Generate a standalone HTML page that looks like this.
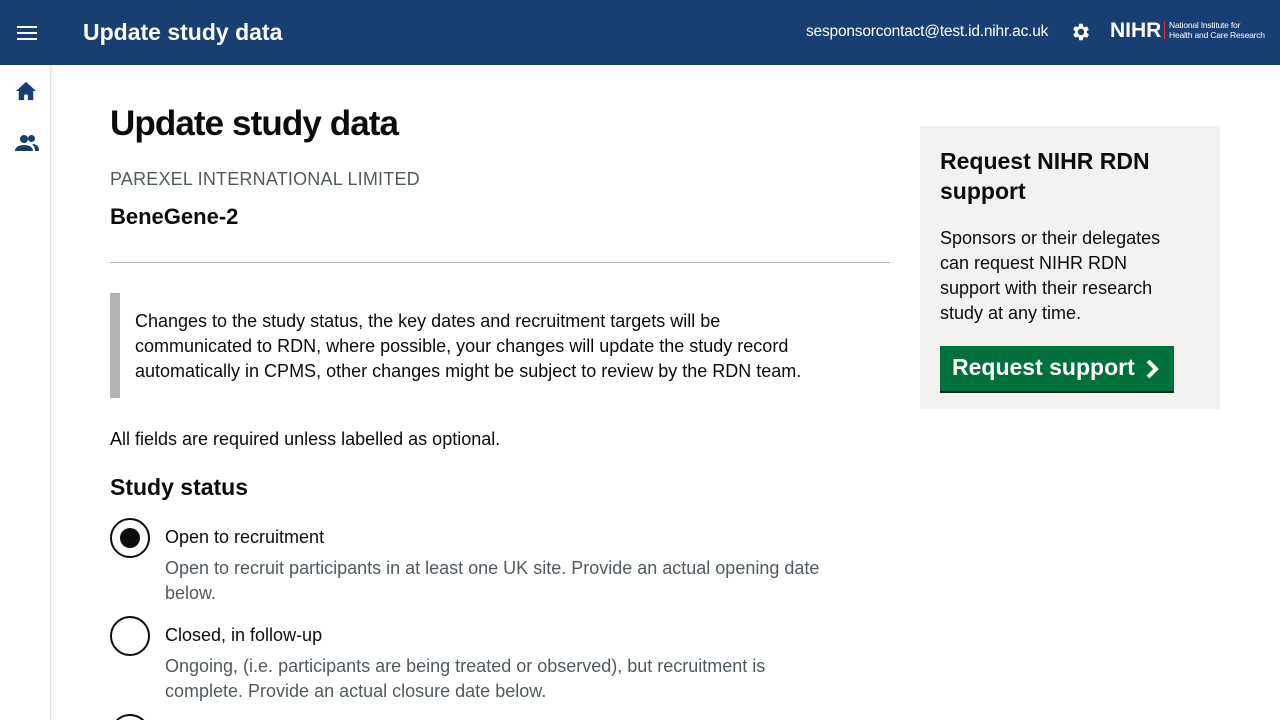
<!DOCTYPE html>
<html style="overflow:hidden"><head><meta charset="utf-8"><style>
*{box-sizing:border-box;margin:0;padding:0}
html,body{width:1280px;height:720px;overflow:hidden}
body{font-family:"Liberation Sans",sans-serif;color:#0b0c0c;background:#fff;position:relative}
.hdr{position:absolute;left:0;top:0;width:1280px;height:65px;background:#193e72;color:#fff}
.side{position:absolute;left:0;top:65px;width:51px;height:655px;background:#fff;border-right:1px solid #e4e4e4;box-shadow:1px 0 3px rgba(0,0,0,.08)}
.abs{position:absolute}
.g{color:#505a5f}
.radio{position:absolute;left:110px;width:40px;height:40px;border:2px solid #0b0c0c;border-radius:50%}
</style></head><body>
<div class="hdr">
  <svg class="abs" style="left:17px;top:25px" width="20" height="15"><rect y="1" width="20" height="2" fill="#fff"/><rect y="7" width="20" height="2" fill="#fff"/><rect y="13" width="20" height="2" fill="#fff"/></svg>
  <div class="abs" style="left:83px;top:19px;font-size:23px;font-weight:bold">Update study data</div>
  <div class="abs" style="left:806px;top:23px;font-size:15.5px;letter-spacing:-0.2px">sesponsorcontact@test.id.nihr.ac.uk</div>
  <svg class="abs" style="left:1070px;top:21px" width="22" height="22" viewBox="0 0 24 24"><path fill="#fff" d="M19.4 13a7.5 7.5 0 0 0 0-2l2.1-1.6-2-3.5-2.5 1a7 7 0 0 0-1.7-1L15 3h-4l-.4 2.7a7 7 0 0 0-1.7 1l-2.5-1-2 3.5L6.6 11a7.5 7.5 0 0 0 0 2l-2.1 1.6 2 3.5 2.5-1a7 7 0 0 0 1.7 1L11 21h4l.4-2.7a7 7 0 0 0 1.7-1l2.5 1 2-3.5zM13 15.5a3.5 3.5 0 1 1 0-7 3.5 3.5 0 0 1 0 7z" transform="translate(-1 0)"/></svg>
  <div class="abs" style="left:1110px;top:19px;font-size:21px;font-weight:bold">NIHR</div>
  <div class="abs" style="left:1164px;top:21px;width:1px;height:18px;background:#c33"></div>
  <div class="abs" style="left:1169px;top:20px;font-size:8.5px;line-height:10px;letter-spacing:-0.2px">National Institute for<br>Health and Care Research</div>
</div>
<div class="side">
  <svg class="abs" style="left:15px;top:16px" width="22" height="20" viewBox="0 0 24 22"><path fill="#193e72" d="M12 1L1 11h3v10h6v-6h4v6h6V11h3z"/></svg>
  <svg class="abs" style="left:15px;top:69px" width="24" height="18" viewBox="0 0 24 18"><circle cx="9" cy="5" r="4" fill="#193e72"/><path fill="#193e72" d="M0 17c0-4 4-6 9-6s9 2 9 6z"/><circle cx="16.5" cy="4.5" r="3.5" fill="#193e72"/><path fill="#193e72" d="M17 10c4 0 7 2 7 6v1h-4c0-3-1-5-3-7z"/></svg>
</div>
<div class="abs" style="left:110px;top:104px;font-size:35px;font-weight:bold;letter-spacing:-0.9px">Update study data</div>
<div class="abs g" style="left:110px;top:169px;font-size:18px;letter-spacing:0.2px">PAREXEL INTERNATIONAL LIMITED</div>
<div class="abs" style="left:110px;top:204px;font-size:22px;font-weight:bold">BeneGene-2</div>
<div class="abs" style="left:110px;top:262px;width:780px;height:1px;background:#b1b4b6"></div>
<div class="abs" style="left:110px;top:293px;width:10px;height:105px;background:#b1b4b6"></div>
<div class="abs" style="left:135px;top:309px;width:700px;font-size:18px;line-height:25px">Changes to the study status, the key dates and recruitment targets will be<br>communicated to RDN, where possible, your changes will update the study record<br>automatically in CPMS, other changes might be subject to review by the RDN team.</div>
<div class="abs" style="left:110px;top:429px;font-size:18px">All fields are required unless labelled as optional.</div>
<div class="abs" style="left:110px;top:474px;font-size:23px;font-weight:bold">Study status</div>
<div class="radio" style="top:518px"><div style="position:absolute;left:8px;top:8px;width:20px;height:20px;border-radius:50%;background:#0b0c0c"></div></div>
<div class="abs" style="left:165px;top:527px;font-size:18px">Open to recruitment</div>
<div class="abs g" style="left:165px;top:556px;width:700px;font-size:18px;line-height:25px">Open to recruit participants in at least one UK site. Provide an actual opening date<br>below.</div>
<div class="radio" style="top:616px"></div>
<div class="abs" style="left:165px;top:625px;font-size:18px">Closed, in follow-up</div>
<div class="abs g" style="left:165px;top:654px;width:700px;font-size:18px;line-height:25px">Ongoing, (i.e. participants are being treated or observed), but recruitment is<br>complete. Provide an actual closure date below.</div>
<div class="radio" style="top:714px"></div>
<div class="abs" style="left:920px;top:126px;width:300px;height:283px;background:#f3f2f1"></div>
<div class="abs" style="left:940px;top:146px;width:260px;font-size:23px;font-weight:bold;line-height:30px">Request NIHR RDN support</div>
<div class="abs" style="left:940px;top:226px;width:260px;font-size:18px;line-height:25px">Sponsors or their delegates<br>can request NIHR RDN<br>support with their research<br>study at any time.</div>
<div class="abs" style="left:940px;top:346px;width:234px;height:45px;background:#00703c;box-shadow:0 2px 0 #002d18;color:#fff;font-size:23px;font-weight:bold;padding:8px 0 0 12px">Request support</div>
<svg class="abs" style="left:1145px;top:359px" width="16" height="20" viewBox="0 0 16 20"><path d="M3 2l8 8-8 8" stroke="#fff" stroke-width="4" fill="none"/></svg>
</body></html>
